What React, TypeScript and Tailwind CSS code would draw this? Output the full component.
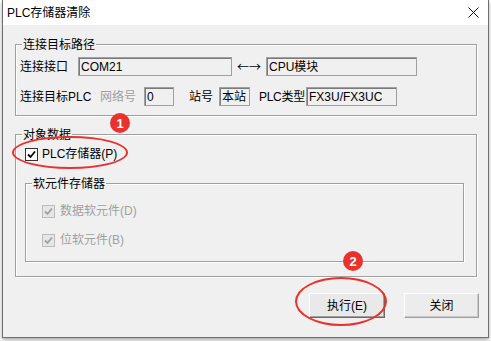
import React from 'react';

const font = { fontFamily: '"Liberation Sans", "Noto Sans CJK SC", sans-serif' };

const groupBox =
  'border border-[#a0a0a0] shadow-[inset_1px_1px_0_#ffffff,1px_1px_0_#ffffff]';

const Field: React.FC<{ width: string; value: string }> = ({ width, value }) => (
  <div
    className={`${width} flex h-[19px] shrink-0 items-center whitespace-nowrap border border-[#a0a0a0] bg-[#f0f0f0] pl-[2px] text-[12px] leading-none text-black shadow-[inset_1px_1px_0_#7a7a7a]`}
  >
    {value}
  </div>
);

const CheckBox: React.FC<{ disabled?: boolean }> = ({ disabled }) => (
  <span
    className={`flex h-[13px] w-[13px] items-center justify-center border ${
      disabled ? 'border-[#bcbcbc] bg-[#e6e6e6]' : 'border-[#333333] bg-white'
    }`}
  >
    <svg width="9" height="9" viewBox="0 0 9 9">
      <polyline
        points="1,4.5 3.5,7 8,1.5"
        fill="none"
        stroke={disabled ? '#a0a0a0' : '#000000'}
        strokeWidth="1.8"
      />
    </svg>
  </span>
);

export default function App() {
  return (
    <div className="relative h-[341px] w-[491px] overflow-hidden bg-white text-[12px] text-black" style={font}>
      <div className="ml-[2px] flex h-[338px] w-[487px] flex-col border-x border-b border-[#6e6e6e] bg-[#f0f0f0] shadow-[0_2px_4px_rgba(0,0,0,0.35)]">
        {/* title bar */}
        <div className="flex h-[25px] items-center justify-between bg-white pl-[4px] pr-[9px]">
          <span className="text-[12px] leading-none">PLC存储器清除</span>
          <svg width="11" height="11" viewBox="0 0 11 11">
            <path d="M0.5 0.5 L10.5 10.5 M10.5 0.5 L0.5 10.5" stroke="#111" strokeWidth="1" />
          </svg>
        </div>

        {/* 连接目标路径 */}
        <div className={`ml-[12px] mr-[11px] mt-[19px] whitespace-nowrap pb-[9px] pl-[4px] ${groupBox}`}>
          <div className="-mt-[8px] ml-[2px] w-fit bg-[#f0f0f0] px-[1px] leading-[16px]">连接目标路径</div>
          <div className="mt-[4px] flex h-[19px] items-center">
            <span className="w-[58px] shrink-0">连接接口</span>
            <Field width="w-[154px]" value="COM21" />
            <span className="w-[34px] shrink-0 text-center" style={{ fontFamily: '"Noto Sans CJK SC", sans-serif' }}>
              ←→
            </span>
            <Field width="w-[151px]" value="CPU模块" />
          </div>
          <div className="mt-[11px] flex h-[19px] items-center">
            <span className="w-[80px] shrink-0">连接目标PLC</span>
            <span className="w-[44px] shrink-0 text-[#a0a0a0]">网络号</span>
            <Field width="w-[30px]" value="0" />
            <span className="ml-[15px] w-[30px] shrink-0">站号</span>
            <Field width="w-[31px]" value="本站" />
            <span className="ml-[9px] w-[47px] shrink-0 tracking-[-0.3px]">PLC类型</span>
            <Field width="w-[91px]" value="FX3U/FX3UC" />
          </div>
        </div>

        {/* 对象数据 */}
        <div className={`ml-[12px] mr-[11px] mt-[18px] pb-[14px] ${groupBox}`}>
          <div className="-mt-[8px] ml-[6px] w-fit bg-[#f0f0f0] px-[1px] leading-[16px]">对象数据</div>
          <label className="mt-[3px] flex h-[16px] items-center pl-[9px]">
            <CheckBox />
            <span className="ml-[4px]">PLC存储器(P)</span>
          </label>

          <div className={`ml-[9px] mr-[12px] mt-[21px] pb-[13px] ${groupBox}`}>
            <div className="-mt-[8px] ml-[6px] w-fit bg-[#f0f0f0] px-[1px] leading-[16px]">软元件存储器</div>
            <label className="mt-[11px] flex h-[16px] items-center pl-[16px] text-[#a0a0a0]">
              <CheckBox disabled />
              <span className="ml-[5px]">数据软元件(D)</span>
            </label>
            <label className="mt-[13px] flex h-[16px] items-center pl-[16px] text-[#a0a0a0]">
              <CheckBox disabled />
              <span className="ml-[5px]">位软元件(B)</span>
            </label>
          </div>
        </div>

        {/* buttons */}
        <div className="mt-[16px] flex justify-end gap-[19px] pr-[9px]">
          <button className="flex h-[25px] w-[76px] items-center justify-center border border-t-white border-l-white border-b-[#696969] border-r-[#696969] bg-[#e9e9e9] shadow-[inset_-1px_-1px_0_#a0a0a0]">
            执行(E)
          </button>
          <button className="flex h-[25px] w-[75px] items-center justify-center border border-t-white border-l-white border-b-[#a0a0a0] border-r-[#a0a0a0] bg-[#ececec] shadow-[inset_-1px_-1px_0_#c8c8c8]">
            关闭
          </button>
        </div>
      </div>

      {/* annotations */}
      <div className="absolute left-[12px] top-[136px] h-[33px] w-[116px] rounded-[50%] border-2 border-[#e8322e]" />
      <div className="absolute left-[110px] top-[113px] flex h-[20px] w-[20px] items-center justify-center rounded-full bg-[#e8322e] text-[13px] font-bold leading-none text-white">
        1
      </div>
      <div className="absolute left-[295px] top-[277px] h-[49px] w-[92px] rounded-[50%] border-2 border-[#e8322e]" />
      <div className="absolute left-[343px] top-[251px] flex h-[20px] w-[20px] items-center justify-center rounded-full bg-[#e8322e] text-[13px] font-bold leading-none text-white">
        2
      </div>
    </div>
  );
}
